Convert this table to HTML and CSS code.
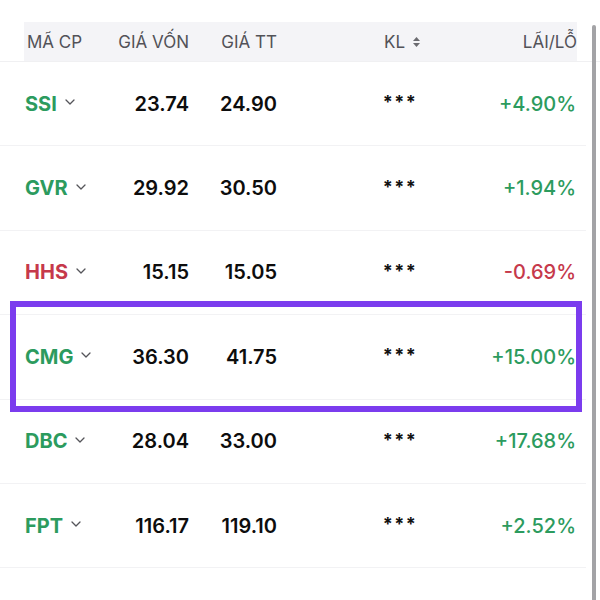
FILE: index.html
```html
<!DOCTYPE html>
<html lang="vi">
<head>
<meta charset="utf-8">
<link rel="stylesheet" href="styles.css">
</head>
<body>
<div class="page">
  <div class="table">
    <div class="head-wrap">
      <div class="head">
        <div class="hc c1">MÃ CP</div>
        <div class="hc c2">GIÁ VỐN</div>
        <div class="hc c3">GIÁ TT</div>
        <div class="hc c4 spacer"></div>
        <div class="hc c5">KL <svg class="sort" width="9" height="12" viewBox="0 0 9 12"><path d="M4.5 1 L8 5 H1 Z M4.5 11 L8 7 H1 Z" fill="#6b6b70"/></svg></div>
        <div class="hc c6">LÃI/LỖ</div>
      </div>
    </div>

    <div class="row">
      <div class="sym up">SSI <svg class="chev" width="10" height="6" viewBox="0 0 10 6"><path d="M1 1 L5 5 L9 1" fill="none" stroke="#55555a" stroke-width="1.3" stroke-linecap="round" stroke-linejoin="round"/></svg></div>
      <div class="num c2">23.74</div>
      <div class="num c3">24.90</div>
      <div class="spacer"></div>
      <div class="kl">***</div>
      <div class="pct up">+4.90%</div>
    </div>
    <div class="row">
      <div class="sym up">GVR <svg class="chev" width="10" height="6" viewBox="0 0 10 6"><path d="M1 1 L5 5 L9 1" fill="none" stroke="#55555a" stroke-width="1.3" stroke-linecap="round" stroke-linejoin="round"/></svg></div>
      <div class="num c2">29.92</div>
      <div class="num c3">30.50</div>
      <div class="spacer"></div>
      <div class="kl">***</div>
      <div class="pct up">+1.94%</div>
    </div>
    <div class="row">
      <div class="sym down">HHS <svg class="chev" width="10" height="6" viewBox="0 0 10 6"><path d="M1 1 L5 5 L9 1" fill="none" stroke="#55555a" stroke-width="1.3" stroke-linecap="round" stroke-linejoin="round"/></svg></div>
      <div class="num c2">15.15</div>
      <div class="num c3">15.05</div>
      <div class="spacer"></div>
      <div class="kl">***</div>
      <div class="pct down">-0.69%</div>
    </div>
    <div class="row">
      <div class="sym up">CMG <svg class="chev" width="10" height="6" viewBox="0 0 10 6"><path d="M1 1 L5 5 L9 1" fill="none" stroke="#55555a" stroke-width="1.3" stroke-linecap="round" stroke-linejoin="round"/></svg></div>
      <div class="num c2">36.30</div>
      <div class="num c3">41.75</div>
      <div class="spacer"></div>
      <div class="kl">***</div>
      <div class="pct up">+15.00%</div>
    </div>
    <div class="row">
      <div class="sym up">DBC <svg class="chev" width="10" height="6" viewBox="0 0 10 6"><path d="M1 1 L5 5 L9 1" fill="none" stroke="#55555a" stroke-width="1.3" stroke-linecap="round" stroke-linejoin="round"/></svg></div>
      <div class="num c2">28.04</div>
      <div class="num c3">33.00</div>
      <div class="spacer"></div>
      <div class="kl">***</div>
      <div class="pct up">+17.68%</div>
    </div>
    <div class="row">
      <div class="sym up">FPT <svg class="chev" width="10" height="6" viewBox="0 0 10 6"><path d="M1 1 L5 5 L9 1" fill="none" stroke="#55555a" stroke-width="1.3" stroke-linecap="round" stroke-linejoin="round"/></svg></div>
      <div class="num c2">116.17</div>
      <div class="num c3">119.10</div>
      <div class="spacer"></div>
      <div class="kl">***</div>
      <div class="pct up">+2.52%</div>
    </div>
  </div>
  <div class="highlight"></div>
  <div class="scrollbar"></div>
</div>
</body>
</html>
```

FILE: styles.css
```css
html, body {
  margin: 0;
  padding: 0;
  background: #ffffff;
}
body {
  font-family: "Inter", "Liberation Sans", sans-serif;
  color: #111;
}
.page {
  position: relative;
  width: 600px;
  height: 600px;
  overflow: hidden;
}
.table {
  padding-top: 22px;
}
.head-wrap {
  border-bottom: 1px solid #f0f0f2;
}
.head {
  margin: 0 23px 0 24px;
  height: 39px;
  background: #f4f4f7;
  display: grid;
  grid-template-columns: 86px 79px 88px 63px 120px 117px;
  align-items: center;
  font-size: 17px;
  color: #525258;
}
.hc.c1 { padding-left: 3px; }
.hc.c2, .hc.c3, .hc.c6 { text-align: right; }
.hc.c5 {
  display: flex;
  justify-content: center;
  align-items: center;
  gap: 7px;
  padding-left: 5px;
}
.sort { display: block; }
.row {
  height: 83.4px;
  border-bottom: 1px solid #f2f2f4;
  padding-left: 24px;
  margin-right: 14px;
  display: grid;
  grid-template-columns: 86px 79px 88px 63px 120px 116px;
  align-items: center;
  font-size: 20px;
}
.sym {
  display: flex;
  align-items: center;
  gap: 8px;
  font-weight: 700;
  padding-left: 1px;
}
.chev { display: block; margin-top: -3px; }
.up { color: #2c9b5e; }
.down { color: #c6394b; }
.num {
  text-align: right;
  font-weight: 600;
  color: #0d0d0d;
}
.kl {
  text-align: center;
  font-weight: 700;
  font-size: 18px;
  letter-spacing: 1.5px;
  margin-top: -4px;
  color: #111;
}
.pct {
  text-align: right;
  font-weight: 500;
  white-space: nowrap;
}
.highlight {
  position: absolute;
  left: 10px;
  top: 301px;
  width: 560px;
  height: 99px;
  border: 6px solid #7b3cee;
}
.scrollbar {
  position: absolute;
  left: 592px;
  top: 25px;
  width: 4px;
  height: 600px;
  border-radius: 2px;
  background: #a3a3a6;
}
```
